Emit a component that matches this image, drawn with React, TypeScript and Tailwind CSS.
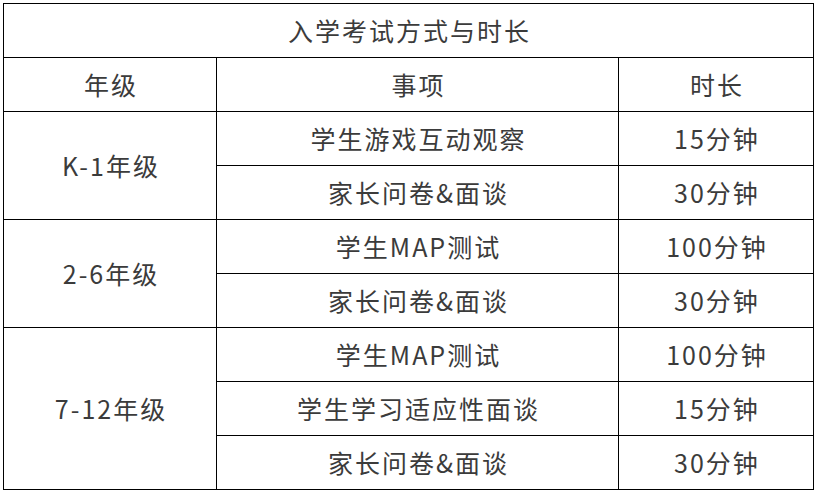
import React from "react";

const groups = [
  {
    grade: "K-1年级",
    span: "row-span-2",
    items: [
      ["学生游戏互动观察", "15分钟"],
      ["家长问卷&面谈", "30分钟"],
    ],
  },
  {
    grade: "2-6年级",
    span: "row-span-2",
    items: [
      ["学生MAP测试", "100分钟"],
      ["家长问卷&面谈", "30分钟"],
    ],
  },
  {
    grade: "7-12年级",
    span: "row-span-3",
    items: [
      ["学生MAP测试", "100分钟"],
      ["学生学习适应性面谈", "15分钟"],
      ["家长问卷&面谈", "30分钟"],
    ],
  },
];

const cell = "bg-white flex items-center justify-center pl-[2px] tracking-[2px]";

export default function App() {
  return (
    <div
      className="min-h-[496px] w-[819px] bg-white pt-[3px] pl-[3px] text-[25px] leading-none text-[#3b3b3b]"
      style={{ fontFamily: '"Noto Sans CJK SC", "Noto Sans", sans-serif' }}
    >
      <div className="grid w-[811px] grid-cols-[212px_401px_194px] auto-rows-[53px] gap-px bg-black p-px">
        <div className={`${cell} col-span-3`}>入学考试方式与时长</div>
        <div className={cell}>年级</div>
        <div className={cell}>事项</div>
        <div className={cell}>时长</div>
        {groups.map((g) => (
          <React.Fragment key={g.grade}>
            <div className={`${cell} ${g.span} col-start-1`}>{g.grade}</div>
            {g.items.map(([item, time], i) => (
              <React.Fragment key={i}>
                <div className={`${cell} col-start-2`}>{item}</div>
                <div className={`${cell} col-start-3`}>{time}</div>
              </React.Fragment>
            ))}
          </React.Fragment>
        ))}
      </div>
    </div>
  );
}
